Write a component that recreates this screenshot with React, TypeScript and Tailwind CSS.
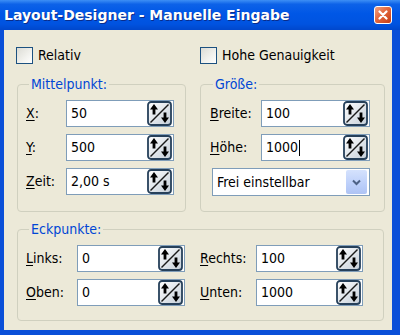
import React from "react";

function Spinner() {
  return (
    <svg width="25" height="25" viewBox="0 0 25 25" className="shrink-0">
      <defs>
        <linearGradient id="sg" x1="0" y1="0" x2="1" y2="1">
          <stop offset="0" stopColor="#ffffff" />
          <stop offset="1" stopColor="#c4ced8" />
        </linearGradient>
      </defs>
      <rect x="1" y="1" width="23" height="23" rx="3" fill="url(#sg)" stroke="#26405a" strokeWidth="1.8" />
      <line x1="21.5" y1="3.5" x2="3.5" y2="21.5" stroke="#1a1a1a" strokeWidth="1.4" />
      <path d="M7 3 L11 8.5 L8.4 8.5 L8.4 13.5 L5.6 13.5 L5.6 8.5 L3 8.5 Z" fill="#000" />
      <path d="M18 22 L22 16.5 L19.4 16.5 L19.4 11.5 L16.6 11.5 L16.6 16.5 L14 16.5 Z" fill="#000" />
    </svg>
  );
}

function Field({ value, w, caret }: { value: string; w: string; caret?: boolean }) {
  return (
    <div className={`${w} h-[27px] bg-white border border-[#7F9DB9] flex items-center justify-between pl-[4px] pr-px`}>
      <span className="flex items-center">
        {value}
        {caret && <span className="inline-block w-px h-[16px] bg-black ml-px" />}
      </span>
      <Spinner />
    </div>
  );
}

function Label({ acc, rest, w }: { acc: string; rest: string; w: string }) {
  return (
    <span className={`${w} shrink-0`}>
      <span className="underline underline-offset-2">{acc}</span>
      {rest}
    </span>
  );
}

function Row({ acc, rest, lw, value, fw, caret }: { acc: string; rest: string; lw: string; value: string; fw: string; caret?: boolean }) {
  return (
    <div className="flex items-center">
      <Label acc={acc} rest={rest} w={lw} />
      <Field value={value} w={fw} caret={caret} />
    </div>
  );
}

function Check({ label }: { label: string }) {
  return (
    <div className="flex items-center gap-[5px]">
      <div className="w-[17px] h-[17px] border border-[#1C5180] bg-[linear-gradient(135deg,#dcdcd5_0%,#f2f2ee_60%,#ffffff_100%)]" />
      <span>{label}</span>
    </div>
  );
}

export default function App() {
  return (
    <div className="w-[400px] h-[335px] flex flex-col bg-[#0a4fd8] font-['DejaVu_Sans_Condensed','Liberation_Sans',sans-serif] text-[14px] text-black overflow-hidden">
      <div className="h-[30px] shrink-0 flex items-center justify-between pl-[4px] pr-[8px] bg-[linear-gradient(to_bottom,#3d8ff5_0%,#0d62e8_14%,#0057e6_45%,#0053e0_80%,#0047cc_100%)]">
        <span className="text-white font-bold text-[14px] font-['DejaVu_Sans',sans-serif] [text-shadow:1px_1px_0_#0a2c8a]">
          Layout-Designer - Manuelle Eingabe
        </span>
        <div className="w-[18px] h-[18px] rounded-[3px] border border-white bg-[linear-gradient(135deg,#f0a283_0%,#e3673d_45%,#c43c14_100%)] flex items-center justify-center">
          <svg width="10" height="10" viewBox="0 0 10 10">
            <path d="M1.5 1.5 L8.5 8.5 M8.5 1.5 L1.5 8.5" stroke="#fff" strokeWidth="2.2" strokeLinecap="round" />
          </svg>
        </div>
      </div>
      <div className="flex-1 flex pl-[4px] pr-[8px] pb-[5px]">
        <div className="flex-1 bg-[#ECE9D8] flex flex-col pl-[12px] pt-[15px]">
          <div className="flex">
            <div className="w-[184px]">
              <Check label="Relativ" />
            </div>
            <Check label="Hohe Genauigkeit" />
          </div>
          <div className="flex gap-[14px] mt-[10px] pl-px">
            <fieldset className="w-[169px] border border-[#D0D0BF] rounded-[4px] pl-[8px] pb-[16px]">
              <legend className="ml-[3px] px-[2px] text-[#0046D5] leading-[16px]">Mittelpunkt:</legend>
              <div className="flex flex-col gap-[7px] pt-[8px]">
                <Row acc="X" rest=":" lw="w-[40px]" value="50" fw="w-[108px]" />
                <Row acc="Y" rest=":" lw="w-[40px]" value="500" fw="w-[108px]" />
                <Row acc="Z" rest="eit:" lw="w-[40px]" value="2,00 s" fw="w-[108px]" />
              </div>
            </fieldset>
            <fieldset className="w-[185px] border border-[#D0D0BF] rounded-[4px] pl-[9px] pb-[12px]">
              <legend className="ml-[3px] px-[2px] text-[#0046D5] leading-[16px]">Größe:</legend>
              <div className="flex flex-col gap-[7px] pt-[8px]">
                <Row acc="B" rest="reite:" lw="w-[51px]" value="100" fw="w-[109px]" />
                <Row acc="H" rest="öhe:" lw="w-[51px]" value="1000" fw="w-[109px]" caret />
                <div className="ml-[2px] w-[158px] h-[28px] bg-white border border-[#7F9DB9] flex items-center justify-between pl-[4px] pr-[2px]">
                  <span>Frei einstellbar</span>
                  <div className="w-[21px] h-[24px] rounded-[2px] bg-[linear-gradient(to_bottom,#d5e2fd_0%,#bccffa_60%,#aec3f4_100%)] flex items-center justify-center">
                    <svg width="9" height="7" viewBox="0 0 9 7">
                      <path d="M1 1.5 L4.5 5 L8 1.5" stroke="#4d6185" strokeWidth="2" fill="none" />
                    </svg>
                  </div>
                </div>
              </div>
            </fieldset>
          </div>
          <fieldset className="mt-[9px] ml-px w-[367px] border border-[#D0D0BF] rounded-[4px] pl-[8px] pb-[14px]">
            <legend className="ml-[3px] px-[2px] text-[#0046D5] leading-[16px]">Eckpunkte:</legend>
            <div className="flex pt-[8px]">
              <div className="flex flex-col gap-[7px] w-[174px]">
                <Row acc="L" rest="inks:" lw="w-[51px]" value="0" fw="w-[108px]" />
                <Row acc="O" rest="ben:" lw="w-[51px]" value="0" fw="w-[108px]" />
              </div>
              <div className="flex flex-col gap-[7px]">
                <Row acc="R" rest="echts:" lw="w-[56px]" value="100" fw="w-[107px]" />
                <Row acc="U" rest="nten:" lw="w-[56px]" value="1000" fw="w-[107px]" />
              </div>
            </div>
          </fieldset>
        </div>
      </div>
    </div>
  );
}
